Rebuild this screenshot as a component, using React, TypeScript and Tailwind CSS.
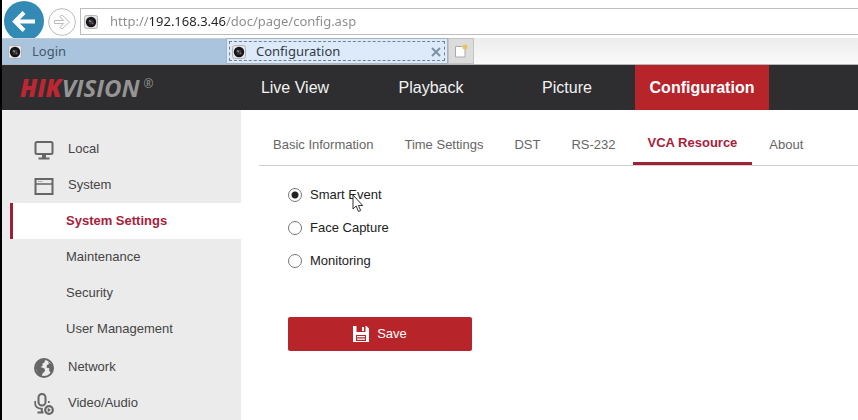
import React, { useState } from "react";

const CameraIcon = () => (
  <svg width="14" height="14" viewBox="0 0 14 14" className="shrink-0">
    <rect x="0.5" y="0.5" width="13" height="13" rx="2" fill="#e4e4e4" stroke="#b5b5b5" />
    <circle cx="7" cy="7" r="5.2" fill="#15151a" />
    <circle cx="7" cy="7" r="2.6" fill="#3b3440" />
    <path d="M5 5.5l2 1.2" stroke="#7fa9a4" strokeWidth="1.2" />
    <circle cx="8.6" cy="8.4" r="0.9" fill="#a0566a" />
  </svg>
);

const MonitorIcon = () => (
  <svg width="20" height="20" viewBox="0 0 20 20" fill="none" stroke="#666" strokeWidth="2">
    <rect x="1.5" y="2" width="17" height="12" rx="1.5" />
    <path d="M10 14v4" strokeWidth="4" />
    <path d="M4.5 18.5h11" />
  </svg>
);

const WindowIcon = () => (
  <svg width="20" height="20" viewBox="0 0 20 20" fill="none" stroke="#666">
    <rect x="1.5" y="3" width="17" height="15" strokeWidth="2" />
    <path d="M2 8h16" strokeWidth="1.5" />
    <path d="M4 5.5h5" stroke="#999" strokeDasharray="1.5 0.7" />
  </svg>
);

const GlobeIcon = () => (
  <svg width="20" height="20" viewBox="0 0 20 20">
    <circle cx="10" cy="10" r="9" fill="#ebebeb" stroke="#666" strokeWidth="2" />
    <path d="M2 8C2.5 4 6 1.5 11 1.5L10.5 4.5L8.5 5.5L8.5 8L6.5 9L10.5 10.5L11 13L8.5 15.5L7.5 18.5C4 17 1.5 13 2 8z" fill="#666" />
    <path d="M14 3.5L18 7L18.5 11.5L17 15L15 12.5L15.5 10.5L12.5 9.5L13 7L15 6z" fill="#666" />
  </svg>
);

const MicIcon = () => (
  <svg width="20" height="22" viewBox="0 0 20 22" fill="none" stroke="#666">
    <rect x="4.5" y="1" width="7" height="11.5" rx="3.5" strokeWidth="2" />
    <path d="M1.2 8v2.5c0 3 2.5 5 6.3 5.2M14.8 8v2" strokeWidth="1.7" />
    <path d="M7.8 15v4M3.5 19.5h6" strokeWidth="2" />
    <circle cx="15" cy="17" r="3.8" strokeWidth="2.2" />
    <path d="M13.7 14.8l3.3 2.2-3.3 2.2z" fill="#666" stroke="none" />
  </svg>
);

const SaveIcon = () => (
  <svg width="16" height="16" viewBox="0 0 16 16">
    <path fill="#fff" fillRule="evenodd" d="M0 0h13.5L16 2.5V16H0zM3.5 0v6h9V0zM3 9v6h10V9z" />
    <path fill="#fff" d="M9 1h2v4H9zM4 10h8v1.2H4zM4 12.5h8v1.2H4z" />
  </svg>
);

const menu = [
  { label: "Local", icon: <MonitorIcon /> },
  { label: "System", icon: <WindowIcon /> },
];

const submenu = ["System Settings", "Maintenance", "Security", "User Management"];

const lowerMenu = [
  { label: "Network", icon: <GlobeIcon /> },
  { label: "Video/Audio", icon: <MicIcon /> },
];

const navItems = ["Live View", "Playback", "Picture", "Configuration"];
const tabs = ["Basic Information", "Time Settings", "DST", "RS-232", "VCA Resource", "About"];
const resources = ["Smart Event", "Face Capture", "Monitoring"];

const MenuLink = ({ label, icon }: { label: string; icon: React.ReactNode }) => (
  <a href="#" className="flex h-9 items-center pl-8">
    <span className="w-[34px] shrink-0 pt-0.5">{icon}</span>
    {label}
  </a>
);

const Browser = () => (
  <div className="font-['Noto_Sans',sans-serif]">
    {/* Address bar */}
    <div className="flex h-[38px] items-start overflow-hidden bg-white">
      <button aria-label="Back" className="mt-px ml-0.5 shrink-0">
        <svg width="40" height="40" viewBox="0 0 40 40">
          <circle cx="20" cy="20" r="20" fill="#338bb5" />
          <path d="M31 20.5H12M20 11.5l-9 9 9 9" fill="none" stroke="#fff" strokeWidth="4" />
        </svg>
      </button>
      <button aria-label="Forward" className="mt-2 ml-1 shrink-0">
        <svg width="28" height="28" viewBox="0 0 28 28" fill="none" stroke="#bbb">
          <circle cx="14" cy="14" r="13.4" fill="#fdfdfd" />
          <path d="M6.5 12.5h9l-3.5-4 2-1.5 7.5 7-7.5 7-2-1.5 3.5-4h-9z" />
        </svg>
      </button>
      <label className="mt-2 ml-1 flex h-[27px] flex-1 items-center border border-r-0 border-[#bdbdbd] pl-[3px]">
        <CameraIcon />
        <input
          type="text"
          aria-label="Address"
          defaultValue="http://192.168.3.46/doc/page/config.asp"
          className="ml-3 flex-1 bg-[linear-gradient(to_right,#8a8a8a_39px,#222_39px,#222_116px,#8a8a8a_116px)] bg-clip-text text-[13px] text-transparent outline-none"
        />
      </label>
    </div>

    {/* Browser tabs */}
    <div className="flex h-[27px] items-stretch border-b border-[#b8b8b8] bg-linear-to-b from-[#ececec] to-[#fafafa] text-[13px] text-[#333c47]">
      <button className="flex w-[224px] items-center gap-2.5 border-t border-[#c4cfda] bg-[#abc4de] pl-1.5 text-[#44576b]">
        <CameraIcon />
        Login
      </button>
      <div className="flex w-[222px] items-center border border-[#a5b4c4] bg-[#dceafa] p-0.5">
        <div className="flex h-full flex-1 items-center border border-dashed border-[#75818e] px-0.5 pt-px">
          <button className="flex flex-1 items-center gap-2.5">
            <CameraIcon />
            Configuration
          </button>
          <button aria-label="Close tab">
            <svg width="12" height="12" viewBox="0 0 12 12" stroke="#7f90a4" strokeWidth="2">
              <path d="M2 2l8 8M10 2l-8 8" />
            </svg>
          </button>
        </div>
      </div>
      <button aria-label="New tab" className="flex w-[26px] items-center justify-center border border-[#c3c3c3] bg-[#dcdcdc]">
        <svg width="14" height="14" viewBox="0 0 14 14">
          <path d="M1.5 2.5h7l2.5 2.5v8H1.5z" fill="#fff" stroke="#aaa" />
          <circle cx="11" cy="3" r="2.5" fill="#e8c263" />
        </svg>
      </button>
    </div>
  </div>
);

const Sidebar = () => (
  <nav className="w-[239px] shrink-0 bg-[#ebebeb] pt-[21px] text-[#454545]">
    {menu.map((item) => (
      <MenuLink key={item.label} {...item} />
    ))}
    <div className="mb-0.5 pl-2">
      {submenu.map((label, i) => (
        <a
          key={label}
          href="#"
          className={
            i === 0
              ? "flex h-9 items-center border-l-3 border-[#9e1f36] bg-white pl-[53px] font-bold text-[#a6213b]"
              : "flex h-9 items-center pl-14"
          }
        >
          {label}
        </a>
      ))}
    </div>
    {lowerMenu.map((item) => (
      <MenuLink key={item.label} {...item} />
    ))}
  </nav>
);

const App = () => {
  const [resource, setResource] = useState("Smart Event");

  return (
    <div className="flex h-screen flex-col overflow-hidden border-l-2 border-black bg-white font-['Liberation_Sans',Arial,sans-serif] text-[13px]">
      <Browser />

      {/* Header */}
      <header className="flex h-[45px] shrink-0 bg-[#2e2e30]">
        <div className="flex w-[225px] items-center pl-[18px] font-['Open_Sans',sans-serif] text-[24px] font-bold italic">
          <span className="font-extrabold text-[#bd2632]">HIK</span>
          <span className="text-[#959595]">VISION</span>
          <span className="mb-2 ml-1 text-[12px] font-normal not-italic text-[#959595]">®</span>
        </div>
        <nav className="flex text-[16px] text-[#f2f2f2]">
          {navItems.map((item) => (
            <a
              key={item}
              href="#"
              className={
                item === "Configuration"
                  ? "flex w-[134px] items-center justify-center bg-[#b7242a] font-bold text-white"
                  : "flex w-[136px] items-center justify-center"
              }
            >
              {item}
            </a>
          ))}
        </nav>
      </header>

      <div className="flex min-h-0 flex-1">
        <Sidebar />

        <main className="min-w-0 flex-1 pl-[18px]">
          {/* Tabs */}
          <div className="flex h-14 items-end gap-[3px] border-b border-[#cfcfcf] text-[#666]">
            {tabs.map((tab) => (
              <button
                key={tab}
                className={
                  tab === "VCA Resource"
                    ? "h-9 border-b-3 border-[#9e2239] px-[15px] pb-1.5 font-bold text-[#a6213b]"
                    : "h-9 px-3.5 pb-1"
                }
              >
                {tab}
              </button>
            ))}
          </div>

          <form className="pt-3 pl-[29px] text-[#222]" onSubmit={(e) => e.preventDefault()}>
            {resources.map((name) => (
              <label key={name} className="relative flex h-[33px] w-fit items-center gap-2">
                <input
                  type="radio"
                  name="resource"
                  checked={resource === name}
                  onChange={() => setResource(name)}
                  className="size-3.5 appearance-none rounded-full border border-[#777] bg-white checked:bg-[radial-gradient(circle,#222_3px,#fff_4px)]"
                />
                {name}
                {name === "Smart Event" && (
                  <svg className="absolute top-4 left-16" width="12" height="20" viewBox="0 0 12 20">
                    <path d="M1 1v14l3.2-3 2.3 5.5 2.2-1-2.3-5h4.3z" fill="#fff" stroke="#333" />
                  </svg>
                )}
              </label>
            ))}
            <button className="mt-10 flex h-[34px] w-[184px] items-center justify-center gap-2 rounded-xs bg-[#b7242a] text-white">
              <SaveIcon />
              Save
            </button>
          </form>
        </main>
      </div>
    </div>
  );
};

export default App;
